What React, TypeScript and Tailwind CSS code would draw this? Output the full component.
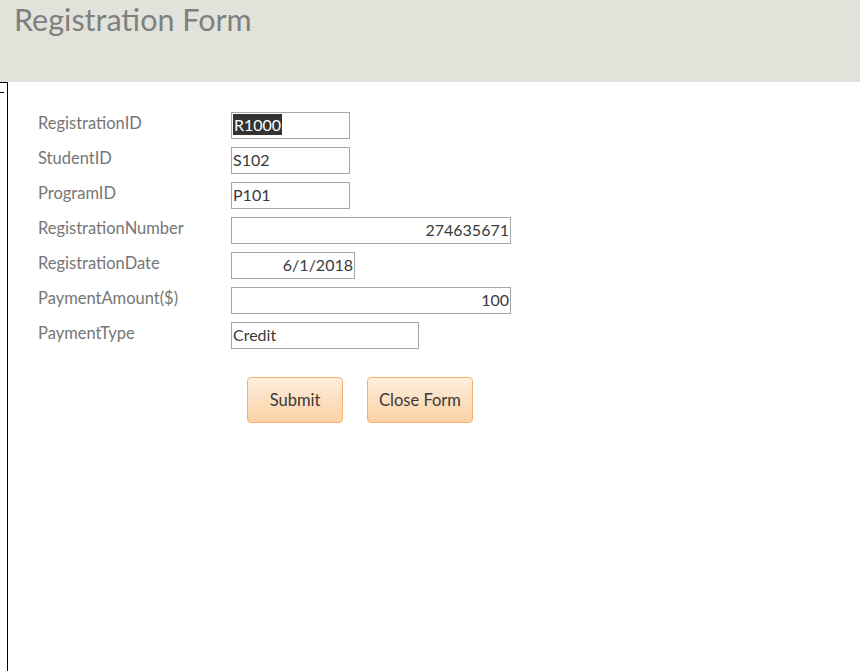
import React from "react";

const rows: { label: string; value: string; w: string; right?: boolean; selected?: boolean }[] = [
  { label: "RegistrationID", value: "R1000", w: "w-[119px]", selected: true },
  { label: "StudentID", value: "S102", w: "w-[119px]" },
  { label: "ProgramID", value: "P101", w: "w-[119px]" },
  { label: "RegistrationNumber", value: "274635671", w: "w-[280px]", right: true },
  { label: "RegistrationDate", value: "6/1/2018", w: "w-[124px]", right: true },
  { label: "PaymentAmount($)", value: "100", w: "w-[280px]", right: true },
  { label: "PaymentType", value: "Credit", w: "w-[188px]" },
];

export default function App() {
  return (
    <div
      className="w-[860px] h-[671px] bg-white overflow-hidden flex flex-col"
      style={{ fontFamily: "Lato, 'Open Sans', sans-serif" }}
    >
      <div className="h-[82px] shrink-0 bg-[#e1e3da] pl-[14px] pt-[0px]">
        <h1 className="text-[30.5px] leading-[38px] text-[#7f7f7f]">Registration Form</h1>
      </div>
      <div className="flex flex-1">
        <div className="relative w-[8px] shrink-0 border-t border-r border-black">
          <div className="absolute left-0 top-[9px] w-[4px] h-px bg-black" />
        </div>
        <div className="flex flex-col pt-[30px]">
          <div className="flex flex-col gap-[8px]">
            {rows.map((r) => (
              <div key={r.label} className="flex items-start h-[27px]">
                <div className="w-[223px] pl-[30px] text-[16.5px] leading-[22px] text-[#767676]">
                  {r.label}
                </div>
                <div
                  className={`${r.w} h-[27px] border border-[#a6a6a6] flex items-center px-[1px] pb-[2px] text-[16px] text-[#3a3a3a] ${
                    r.right ? "justify-end" : "justify-start"
                  }`}
                >
                  {r.selected ? (
                    <span className="bg-[#333333] text-white leading-[21px] px-[1px]">{r.value}</span>
                  ) : (
                    <span className="leading-[21px]">{r.value}</span>
                  )}
                </div>
              </div>
            ))}
          </div>
          <div className="flex gap-[24px] pl-[239px] mt-[28px]">
            <button className="w-[96px] h-[46px] rounded-[4px] border border-[#f6b26b] bg-gradient-to-b from-[#fdeede] to-[#fcd1a4] text-[16.5px] text-[#3a3a3a]">
              Submit
            </button>
            <button className="w-[106px] h-[46px] rounded-[4px] border border-[#f6b26b] bg-gradient-to-b from-[#fdeede] to-[#fcd1a4] text-[16.5px] text-[#3a3a3a]">
              Close Form
            </button>
          </div>
        </div>
      </div>
    </div>
  );
}
